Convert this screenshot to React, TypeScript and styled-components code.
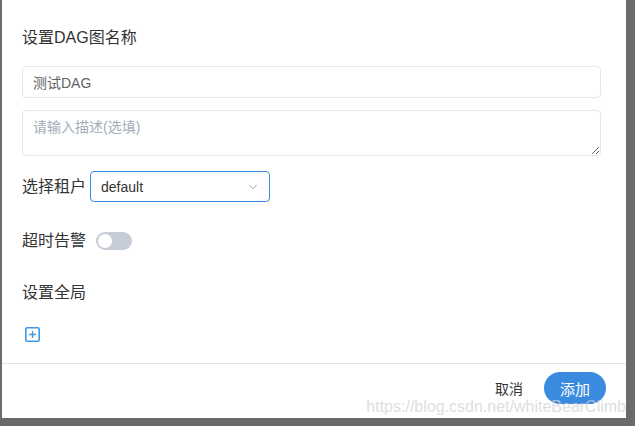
import styled, { createGlobalStyle } from 'styled-components';
import { ChevronDown } from 'lucide-react';

const GlobalStyle = createGlobalStyle`
  html, body {
    margin: 0;
    padding: 0;
    background: #6b6b6b;
  }
  body {
    font-family: 'Helvetica Neue', 'Liberation Sans', 'Noto Sans CJK SC', sans-serif;
    height: 426px;
    overflow: hidden;
  }
`;

const Dialog = styled.div`
  position: relative;
  display: flex;
  flex-direction: column;
  width: 624px;
  height: 418px;
  margin-left: 2px;
  background: #fff;
`;

const Body = styled.div`
  flex: 1;
  display: flex;
  flex-direction: column;
  padding: 28px 25px 0 20px;
`;

const Title = styled.div`
  font-size: 16px;
  line-height: 20px;
  color: #333;
  margin-bottom: 18px;
`;

const TextInput = styled.input`
  box-sizing: border-box;
  height: 32px;
  width: 100%;
  padding: 0 10px;
  border: 1px solid #e3e6ec;
  border-radius: 4px;
  font: inherit;
  font-size: 14px;
  color: #606266;
  outline: none;
`;

const TextArea = styled.textarea`
  box-sizing: border-box;
  height: 46px;
  width: 100%;
  margin-top: 12px;
  padding: 6px 10px;
  border: 1px solid #e3e6ec;
  border-radius: 4px;
  font: inherit;
  font-size: 14px;
  line-height: 20px;
  color: #606266;
  outline: none;
  &::placeholder {
    color: #a3acba;
  }
`;

const Row = styled.div<{ $top: number }>`
  display: flex;
  align-items: center;
  gap: 4px;
  margin-top: ${p => p.$top}px;
`;

const Label = styled.span`
  font-size: 16px;
  line-height: 20px;
  color: #333;
`;

const Select = styled.div`
  box-sizing: border-box;
  display: flex;
  align-items: center;
  justify-content: space-between;
  width: 180px;
  height: 31px;
  padding: 0 9px 0 10px;
  border: 1px solid #3a8be0;
  border-radius: 4px;
  font-size: 14px;
  color: #333;
`;

const Switch = styled.span<{ $on?: boolean }>`
  position: relative;
  display: inline-block;
  width: 36px;
  height: 18px;
  margin-left: 6px;
  border-radius: 9px;
  background: ${p => (p.$on ? '#3a8be0' : '#c6cdd7')};
  &::after {
    content: '';
    position: absolute;
    top: 2px;
    left: ${p => (p.$on ? '20px' : '2px')};
    width: 14px;
    height: 14px;
    border-radius: 50%;
    background: #fff;
  }
`;

const Section = styled.div`
  margin-top: 32px;
  font-size: 16px;
  line-height: 20px;
  color: #333;
`;

const AddIcon = styled.button`
  display: flex;
  width: 15px;
  height: 15px;
  margin-top: 24px;
  margin-left: 3px;
  padding: 0;
  border: none;
  background: none;
  cursor: pointer;
`;

const Footer = styled.div`
  box-sizing: border-box;
  display: flex;
  justify-content: flex-end;
  align-items: flex-start;
  gap: 21px;
  height: 55px;
  padding: 8px 20px 0 0;
  border-top: 1px solid #e2e2e2;
`;

const TextButton = styled.button`
  height: 32px;
  border: none;
  background: none;
  padding: 0;
  font: inherit;
  font-size: 14px;
  color: #333;
  cursor: pointer;
`;

const PrimaryButton = styled.button`
  width: 62px;
  height: 32px;
  border: none;
  border-radius: 16px;
  background: #3a8be0;
  color: #fff;
  font: inherit;
  font-size: 15px;
  cursor: pointer;
`;

const Watermark = styled.div`
  position: absolute;
  right: 0;
  bottom: 2px;
  font-family: 'Liberation Sans', Arial, sans-serif;
  font-size: 16px;
  color: rgba(210, 210, 210, 0.75);
  pointer-events: none;
  white-space: nowrap;
`;

export default function App() {
  return (
    <>
      <GlobalStyle />
      <Dialog>
        <Body>
          <Title>设置DAG图名称</Title>
          <TextInput defaultValue="测试DAG" />
          <TextArea placeholder="请输入描述(选填)" />
          <Row $top={15}>
            <Label>选择租户</Label>
            <Select>
              <span>default</span>
              <ChevronDown size={14} color="#999" strokeWidth={1.5} />
            </Select>
          </Row>
          <Row $top={29}>
            <Label>超时告警</Label>
            <Switch />
          </Row>
          <Section>设置全局</Section>
          <AddIcon aria-label="add">
            <svg width="15" height="15" viewBox="0 0 15 15">
              <rect x="0.8" y="0.8" width="13.4" height="13.4" rx="1.5" fill="none" stroke="#3f97e8" strokeWidth="1.6" />
              <path d="M7.5 4v7M4 7.5h7" stroke="#3f97e8" strokeWidth="1.4" />
            </svg>
          </AddIcon>
        </Body>
        <Footer>
          <TextButton>取消</TextButton>
          <PrimaryButton>添加</PrimaryButton>
        </Footer>
        <Watermark>https://blog.csdn.net/whiteBearClimb</Watermark>
      </Dialog>
    </>
  );
}
